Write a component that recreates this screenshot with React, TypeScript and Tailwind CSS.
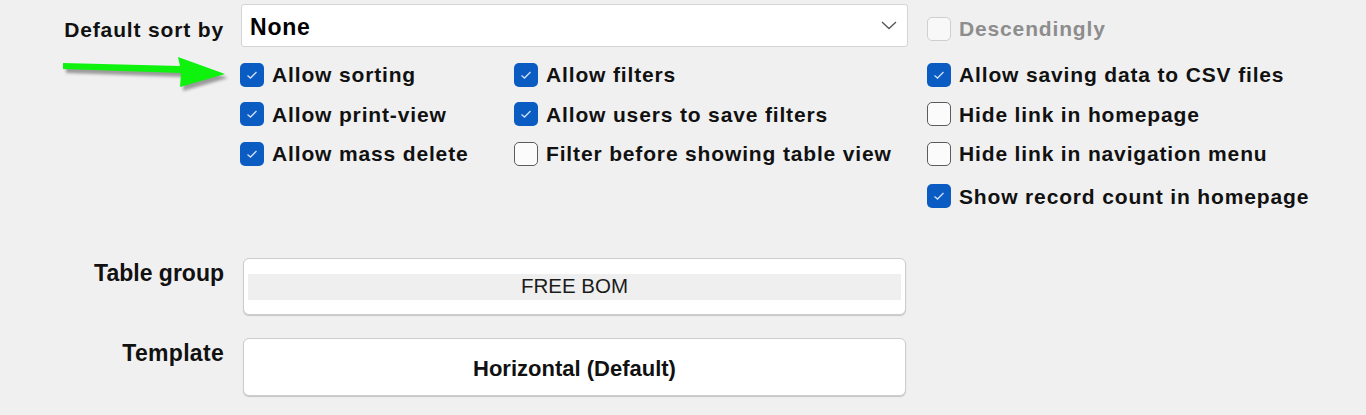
import React from "react";

const topFont = "font-['Liberation_Sans',Arial,sans-serif] font-bold text-[21px] tracking-[0.85px]";
const lowFont = "font-['Liberation_Sans',Arial,sans-serif]";

function Check({ checked, disabled, label }: { checked?: boolean; disabled?: boolean; label: string }) {
  return (
    <div className="flex items-center gap-[8px]">
      {checked ? (
        <span className="w-[24px] h-[24px] rounded-[5px] bg-[#0a5cc2] flex items-center justify-center shrink-0">
          <svg width="12" height="10" viewBox="0 0 12 10">
            <polyline points="1.5,5.5 4.5,8 10.5,2" fill="none" stroke="#cfe0f7" strokeWidth="1.3" />
          </svg>
        </span>
      ) : disabled ? (
        <span className="w-[24px] h-[24px] rounded-[5px] border-[1.5px] border-[#cfcfcf] bg-[#f8f8f8] shrink-0" />
      ) : (
        <span className="w-[24px] h-[24px] rounded-[5px] border-[1.5px] border-[#5c5c5c] bg-[#fbfbfb] shrink-0" />
      )}
      <span className={`${topFont} whitespace-nowrap ${disabled ? "text-[#8d8d8d]" : "text-[#111]"}`}>{label}</span>
    </div>
  );
}

function Arrow() {
  return (
    <svg className="absolute left-[55px] top-[52px]" width="190" height="45" viewBox="55 52 190 45">
      <defs>
        <filter id="sh" x="-20%" y="-50%" width="140%" height="200%">
          <feGaussianBlur stdDeviation="1.6" />
        </filter>
      </defs>
      <g transform="translate(3,4)" filter="url(#sh)" fill="#555" opacity="0.55">
        <polygon points="63,63 180,66 178,57 225,74 180,87 181,73 63,69" />
      </g>
      <polygon points="63,63 180,66 178,57 225,74 180,87 181,73 63,69" fill="#0ef20e" />
    </svg>
  );
}

export default function App() {
  return (
    <div className="relative w-[1366px] h-[415px] bg-[#f0f0f0] overflow-hidden">
      <Arrow />

      {/* sort row */}
      <div className="flex items-start pt-[4px]">
        <div className={`${topFont} text-[#111] w-[224px] text-right whitespace-nowrap pt-[10px]`}>Default sort by</div>
        <div className="ml-[17px] w-[667px] h-[43px] bg-white border border-[#d4d4d4] rounded-[3px] flex items-center justify-between pl-[8px] pr-[10px]">
          <span className="font-['Liberation_Sans',Arial,sans-serif] font-bold text-[23px] tracking-[0.8px] text-black pt-[3px]">None</span>
          <svg width="16" height="9" viewBox="0 0 16 9">
            <polyline points="1,1 8,7.5 15,1" fill="none" stroke="#555" strokeWidth="1.3" />
          </svg>
        </div>
        <div className="ml-[19px] mt-[9px]">
          <Check disabled label="Descendingly" />
        </div>
      </div>

      {/* options */}
      <div className="flex pl-[240px] pt-[8px]">
        <div className="w-[274px] flex flex-col">
          {["Allow sorting", "Allow print-view", "Allow mass delete"].map((t) => (
            <div key={t} className="h-[39.5px] flex items-center">
              <Check checked label={t} />
            </div>
          ))}
        </div>
        <div className="w-[413px] flex flex-col">
          <div className="h-[39.5px] flex items-center"><Check checked label="Allow filters" /></div>
          <div className="h-[39.5px] flex items-center"><Check checked label="Allow users to save filters" /></div>
          <div className="h-[39.5px] flex items-center"><Check label="Filter before showing table view" /></div>
        </div>
        <div className="flex flex-col">
          <div className="h-[39.5px] flex items-center"><Check checked label="Allow saving data to CSV files" /></div>
          <div className="h-[39.5px] flex items-center"><Check label="Hide link in homepage" /></div>
          <div className="h-[39.5px] flex items-center"><Check label="Hide link in navigation menu" /></div>
          <div className="h-[39.5px] mt-[3px] flex items-center"><Check checked label="Show record count in homepage" /></div>
        </div>
      </div>

      {/* group / template */}
      <div className={`${lowFont} flex flex-col gap-[23px] mt-[42px]`}>
        <div className="flex items-start">
          <div className="w-[224px] text-right font-bold text-[23px] text-[#111] leading-none pt-[4px]">Table group</div>
          <div className="ml-[19px] w-[663px] h-[57px] bg-white border border-[#cdcdcd] rounded-[6px] shadow-[0_1px_1px_rgba(0,0,0,0.18)] flex items-center px-[4px]">
            <div className="w-full h-[26px] bg-[#efefef] flex items-center justify-center text-[20.5px] text-[#1b1b1b]">FREE BOM</div>
          </div>
        </div>
        <div className="flex items-start">
          <div className="w-[224px] text-right font-bold text-[23px] tracking-[0.3px] text-[#111] leading-none pt-[4px]">Template</div>
          <div className="ml-[19px] w-[663px] h-[58px] bg-white border border-[#cdcdcd] rounded-[6px] shadow-[0_1px_1px_rgba(0,0,0,0.18)] flex items-center justify-center pt-[2px]">
            <span className="font-bold text-[22px] text-[#111]">Horizontal (Default)</span>
          </div>
        </div>
      </div>
    </div>
  );
}
